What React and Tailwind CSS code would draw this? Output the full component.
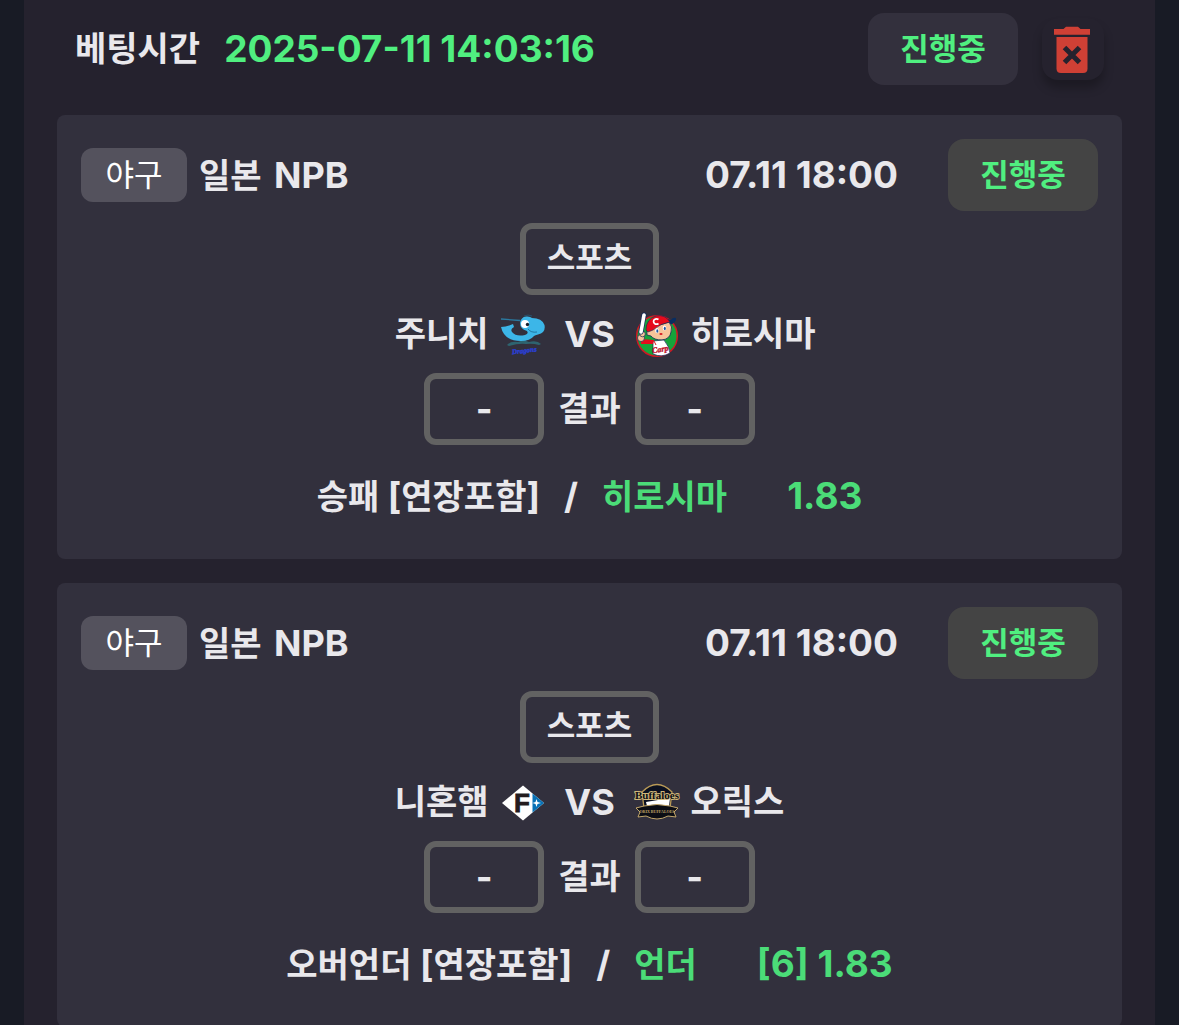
const ko = "font-['Noto_Sans_CJK_KR',sans-serif]";

function Ko({ children }) {
  return (
    <span lang="ko" className="font-['Noto_Sans_CJK_KR',sans-serif] text-[34px] leading-none font-bold">
      {children}
    </span>
  );
}

function Status({ tone }) {
  return (
    <button
      type="button"
      lang="ko"
      className={`${ko} h-[72px] w-[150px] shrink-0 rounded-2xl pb-1 text-[31px] leading-[68px] font-bold text-[#50ef80] ${tone}`}
    >
      진행중
    </button>
  );
}

function TrashIcon() {
  return (
    <svg viewBox="0 0 36 48" className="h-12 w-9" aria-hidden="true">
      <path d="M0 3H9.500L12 .8H24L26.500 3H36V8.700H0Z" fill="#cf4035" />
      <path d="M2.500 11H33.500V42.500Q33.500 47 29 47H7Q2.500 47 2.500 42.500Z" fill="#cf4035" />
      <path d="M10.500 21.500L25.500 36.500M25.500 21.500L10.500 36.500" stroke="#25222e" strokeWidth="5" />
    </svg>
  );
}

function DragonsLogo() {
  return (
    <svg viewBox="0 0 48 48" className="size-12 shrink-0" role="img" aria-label="주니치">
      <path d="M8 35Q11 31 19 32L24 30L30 32Q38 30 42 34L40 35Q33 33 27 34Q20 33 10 36Z" fill="#2e6470" />
      <path d="M2 17Q8 17 14 14L15 17Q11 19 13 22Q17 27 26 25Q30 24 28 21Q21 19 21 13Q22 7 27 6.500Q31 6 33 8Q43 8 45.500 15Q47 23 39 24.500Q36 25 35 26Q31 31 22 31Q5 31 2 17Z" fill="#3cb6e8" />
      <path d="M2 9L21 10.500" stroke="#2b79a0" strokeWidth="1.300" />
      <path d="M25 6Q29 4 33 6" stroke="#28506a" fill="none" />
      <ellipse cx="26" cy="14" rx="4" ry="4" fill="#fff" />
      <circle cx="28.500" cy="14.500" r="1.700" fill="#17212e" />
      <path d="M29 19Q32 23 38 22" stroke="#19678f" strokeWidth=".8" fill="none" />
      <text x="13" y="43" fontSize="7" fontStyle="italic" fontWeight="bold" fontFamily="Liberation Serif, serif" fill="#2b3fd0" stroke="#2b3fd0" strokeWidth=".5" transform="rotate(-7 24 42)">Dragons</text>
    </svg>
  );
}

function CarpLogo() {
  return (
    <svg viewBox="0 0 48 48" className="size-12 shrink-0" role="img" aria-label="히로시마">
      <circle cx="24" cy="26" r="20.300" fill="#16a43a" stroke="#cf1824" strokeWidth="1.500" />
      <path d="M30 11Q34 8 38 10Q40 7 43 8Q44 12 37 15Z" fill="#082d61" />
      <path d="M18 19Q24 15 30 14L36 12Q40 17 38 22Q37 29 29 30Q21 30 18 26L14 25L14 20Z" fill="#f7c49a" stroke="#132957" strokeWidth=".8" />
      <path d="M13 20Q13 9 23 6Q32 4 37 12Q28 13 20 20L15 22Z" fill="#e60b1c" stroke="#132957" strokeWidth=".6" />
      <path d="M25.500 9.500A3 2.600 0 1 0 25.500 13.500" fill="none" stroke="#fff" strokeWidth="1.700" />
      <path d="M20 31L31 30Q36 36 37 43Q29 48 20 44Z" fill="#fff" stroke="#132957" strokeWidth=".7" />
      <path d="M8 29L21 30L20 34L8 34Z" fill="#e60b1c" />
      <path d="M21 31L23 35" stroke="#d61824" strokeWidth="1" />
      <circle cx="8" cy="28" r="3.500" fill="#f7c49a" stroke="#132957" strokeWidth=".7" />
      <circle cx="9.500" cy="24" r="2.800" fill="#f7c49a" stroke="#132957" strokeWidth=".7" />
      <path d="M8 22L11 5" stroke="#132957" strokeWidth="5" strokeLinecap="round" />
      <path d="M8 22L11 5" stroke="#fff" strokeWidth="3.600" strokeLinecap="round" />
      <ellipse cx="24" cy="20.500" rx="1.800" ry="2.500" fill="#fff" />
      <ellipse cx="31.500" cy="18" rx="1.800" ry="2.500" fill="#fff" />
      <ellipse cx="24.300" cy="21" rx="1" ry="1.700" fill="#1c55a0" />
      <ellipse cx="31.800" cy="18.500" rx="1" ry="1.700" fill="#1c55a0" />
      <ellipse cx="28" cy="24" rx="1.600" ry="1" fill="#d61824" />
      <text x="19" y="42" fontSize="8" fontWeight="bold" fontStyle="italic" fontFamily="Liberation Serif, serif" fill="#bd112b" stroke="#bd112b" strokeWidth=".4" transform="rotate(-10 27 40)">Carp</text>
    </svg>
  );
}

function FightersLogo() {
  return (
    <svg viewBox="0 0 48 48" className="size-12 shrink-0" role="img" aria-label="니혼햄">
      <path d="M3 25L24 7.500L45 25L24 42.500Z" fill="#fff" />
      <path d="M33.500 15.500L45 25L33.500 34.500Z" fill="#0871b5" />
      <text x="15" y="34" fontSize="26" fontWeight="bold" fontFamily="Liberation Sans, sans-serif" fill="#231c1e" stroke="#231c1e" strokeWidth=".8">F</text>
      <path d="M37.500 21L38.500 24L42 25L38.500 26L37.500 29L36.500 26L33.500 25L36.500 24Z" fill="#fff" />
    </svg>
  );
}

function BuffaloesLogo() {
  return (
    <svg viewBox="0 0 48 48" className="size-12 shrink-0" role="img" aria-label="오릭스">
      <path d="M9 14Q24 -1 39 14L37 30L24 37L11 30Z" fill="#0b1020" stroke="#b99a57" strokeWidth="1.300" />
      <path d="M13 24L37 20L36 28H14Z" fill="#fff" />
      <path d="M3 30L11 28Q24 25 37 28L45 30L41 34L43 39L35 38Q24 44 13 38L5 39L7 34Z" fill="#0b0d14" stroke="#c3a76b" strokeWidth="1" />
      <text x="24" y="20.500" textAnchor="middle" fontSize="11" fontWeight="bold" fontFamily="Liberation Serif, serif" fill="#0b0d14" stroke="#d0b678" strokeWidth="1.800" paintOrder="stroke">Buffaloes</text>
      <text x="24" y="35" textAnchor="middle" fontSize="4" fontWeight="bold" fontFamily="Liberation Serif, serif" fill="#c3a76b">ORIX BUFFALOES</text>
    </svg>
  );
}

function Score() {
  return (
    <div className="flex h-[72px] w-[120px] items-center justify-center rounded-xl border-6 border-[#626262]">-</div>
  );
}

function Match({ home, away, HomeLogo, AwayLogo, market, pick, odds }) {
  return (
    <article className="flex flex-col gap-3 rounded-lg bg-[#32303d] px-6 pt-6 pb-9">
      <header className="flex items-center">
        <span lang="ko" className={`${ko} flex h-[54px] w-[106px] items-center justify-center rounded-xl bg-[#54525d] pb-1 text-[31px] font-normal text-white`}>
          야구
        </span>
        <h2 className="ml-3 flex-1">
          <Ko>일본</Ko> <span className="ml-1">NPB</span>
        </h2>
        <time className="mr-[50px] text-[37px]">07.11 18:00</time>
        <Status tone="bg-[#444444]" />
      </header>
      <div lang="ko" className={`${ko} flex h-[72px] w-[139px] justify-center self-center rounded-xl border-6 border-[#626262] text-[31px] leading-[54px] font-bold`}>
        스포츠
      </div>
      <div className="grid h-[54px] grid-cols-[1fr_86px_1fr] items-center leading-[50px]">
        <div className="flex items-center justify-end gap-2.5">
          <span className="pb-0.5"><Ko>{home}</Ko></span>
          <HomeLogo />
        </div>
        <span className="text-center">VS</span>
        <div className="flex items-center gap-2.5">
          <AwayLogo />
          <span className="pb-0.5"><Ko>{away}</Ko></span>
        </div>
      </div>
      <div className="flex items-center justify-center gap-3.5">
        <Score />
        <span className="pb-0.5"><Ko>결과</Ko></span>
        <Score />
      </div>
      <div className="mt-3 flex h-[54px] items-center justify-center">
        <span><Ko>{market}</Ko> [<Ko>연장포함</Ko>]</span>
        <span className="mx-6">/</span>
        <span className="text-[#4bdc78]"><Ko>{pick}</Ko></span>
        <span className="ml-[60px] text-[37px] text-[#4bdc78]">{odds}</span>
      </div>
    </article>
  );
}

export default function App() {
  return (
    <div className="h-screen overflow-hidden bg-[#181b25] px-6 font-['Inter','Noto_Sans_CJK_KR',sans-serif] text-4xl leading-[54px] font-bold text-[#e9e8ec]">
      <main className="bg-[#25222e] px-[33px] pt-[13px] pb-8">
        <header className="mb-[30px] flex h-[72px] items-center pr-[18px] pl-[18px]">
          <span className="pb-0.5"><Ko>베팅시간</Ko></span>
          <time className="ml-6 flex-1 text-[37px] text-[#50ef80]">2025-07-11 14:03:16</time>
          <Status tone="bg-[#33303d]" />
          <button type="button" aria-label="삭제" className="ml-6 flex h-[62px] w-[62px] items-center justify-center rounded-2xl bg-[#25222e] pt-0.5 pr-0.5 shadow-[0_8px_10px_rgba(0,0,0,0.25)]">
            <TrashIcon />
          </button>
        </header>
        <div className="flex flex-col gap-6">
          <Match home="주니치" away="히로시마" HomeLogo={DragonsLogo} AwayLogo={CarpLogo} market="승패" pick="히로시마" odds="1.83" />
          <Match home="니혼햄" away="오릭스" HomeLogo={FightersLogo} AwayLogo={BuffaloesLogo} market="오버언더" pick="언더" odds="[6] 1.83" />
        </div>
      </main>
    </div>
  );
}
